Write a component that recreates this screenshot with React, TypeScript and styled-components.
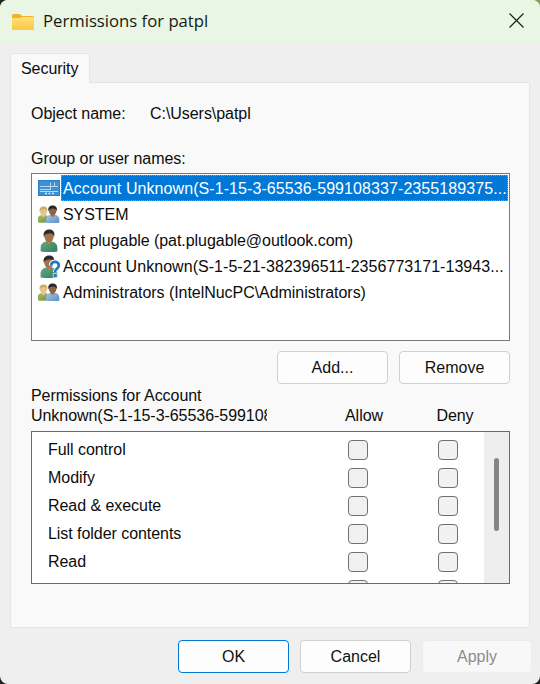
import React from "react";
import styled, { createGlobalStyle } from "styled-components";

const Global = createGlobalStyle`
  html, body { margin: 0; padding: 0; width: 540px; height: 684px; overflow: hidden; }
  body {
    background:
      linear-gradient(90deg, #23281c 50%, #8d9a62 50%) top / 100% 50% no-repeat,
      #20221b;
    font-family: "Liberation Sans", Arial, sans-serif;
    font-size: 16px;
    letter-spacing: -0.05px;
    color: #0c0c0c;
  }
  #root { width: 540px; height: 684px; }
`;

const Window = styled.div`
  width: 540px; height: 684px; background: #efefef; border-radius: 8px;
  overflow: hidden; display: flex; flex-direction: column;
`;
const TitleBar = styled.header`
  height: 43px; flex: none; background: #e9f6e3; display: flex; align-items: center;
  padding: 0 16px 0 12px; box-sizing: border-box;
`;
const TitleText = styled.span`
  margin-left: 9px; flex: 1; font-family: "Open Sans", "Noto Sans", sans-serif; font-size: 16.7px;
  letter-spacing: 0; color: #151a14; margin-bottom: 2px;
`;
const CloseBtn = styled.div`
  width: 15px; height: 15px; display: flex; margin-bottom: 2px;
`;
const Body = styled.div`
  flex: 1; padding: 10px 8px 0 10px; display: flex; flex-direction: column; min-height: 0;
`;
const TabStrip = styled.div`
  display: flex; height: 29px; flex: none; position: relative; z-index: 1;
`;
const Tab = styled.div`
  width: 80px; height: 30px; box-sizing: border-box; background: #f9f9f9;
  border: 1px solid #e5e5e5; border-bottom: none; border-radius: 3px 3px 0 0;
  padding-left: 10px; line-height: 30px; font-size: 16px;
`;
const Panel = styled.section`
  width: 520px; height: 546px; flex: none; box-sizing: border-box; background: #f9f9f9;
  border: 1px solid #e5e5e5; padding: 21px 19px 0 20px; display: flex; flex-direction: column;
`;
const ObjectRow = styled.div`
  display: flex; height: 20px; line-height: 20px;
`;
const ObjectLabel = styled.span`
  width: 119px;
`;
const SectionLabel = styled.div`
  margin-top: 25px; height: 20px; line-height: 20px;
`;
const UserList = styled.div`
  margin-top: 4px; height: 168px; box-sizing: border-box; background: #fff;
  border: 1px solid #7a7a7a; padding: 1px; display: flex; flex-direction: column;
`;
const UserRow = styled.div`
  height: 26px; flex: none; display: flex; align-items: center; padding-left: 5px;
`;
const UserIcon = styled.div`
  width: 24px; height: 24px; flex: none; display: flex; align-items: center; justify-content: flex-start;
`;
const UserName = styled.span<{ $selected?: boolean; $spacing?: number }>`
  margin-left: -1px; padding: ${p => (p.$selected ? "1px" : "2px")} 0 0 2px; flex: ${p => (p.$selected ? 1 : "none")};
  height: ${p => (p.$selected ? "26px" : "auto")};
  line-height: ${p => (p.$selected ? "25px" : "normal")};
  letter-spacing: ${p => p.$spacing ?? -0.05}px;
  box-sizing: border-box; white-space: nowrap; overflow: hidden;
  background: ${p => (p.$selected ? "#0078d7" : "transparent")};
  color: ${p => (p.$selected ? "#fff" : "inherit")};
  outline: ${p => (p.$selected ? "1px dotted #f08a24" : "none")};
  outline-offset: -1px;
`;
const ButtonRow = styled.div`
  display: flex; justify-content: flex-end; gap: 11px; flex: none;
`;
const AddRow = styled(ButtonRow)`
  margin-top: 10px;
`;
const Button = styled.button<{ $primary?: boolean; $w?: number }>`
  width: ${p => p.$w ?? 111}px; height: 33px; box-sizing: border-box; border-radius: 4px;
  background: #fdfdfd; border: 1px solid ${p => (p.$primary ? "#0078d4" : "#d0d0d0")};
  font: 16px "Liberation Sans", Arial, sans-serif; color: #111; padding: 0;
  &:disabled { background: #f8f8f8; border-color: #ececec; color: #8c8c8c; }
`;
const PermHeader = styled.div`
  margin-top: 2px; height: 45px; display: flex;
`;
const PermTitle = styled.div`
  width: 236px; flex: none; line-height: 20px; overflow: hidden; white-space: nowrap;
`;
const PermCol = styled.div<{ $ml: number }>`
  width: 74px; margin-left: ${p => p.$ml}px; flex: none; text-align: center; line-height: 20px;
  padding-top: 20px; box-sizing: border-box;
`;
const PermBox = styled.div`
  height: 153px; box-sizing: border-box; background: #fff; border: 1px solid #6a6a6a;
  display: flex; overflow: hidden;
`;
const PermRows = styled.div`
  flex: 1; padding: 4px 0 0 16px; display: flex; flex-direction: column;
`;
const PermRow = styled.div`
  height: 28px; flex: none; display: flex; align-items: center;
`;
const PermName = styled.span`
  width: 300px; flex: none;
`;
const CheckBox = styled.span<{ $deny?: boolean }>`
  width: 20px; height: 20px; box-sizing: border-box; flex: none; background: #f1f1f1;
  border: 1px solid #707070; border-radius: 4px; margin-left: ${p => (p.$deny ? "70px" : "0")};
`;
const ScrollTrack = styled.div`
  width: 25px; flex: none; background: #eeeeee; position: relative;
`;
const ScrollThumb = styled.div`
  position: absolute; left: 10px; top: 26px; width: 5px; height: 73px; border-radius: 3px; background: #858585;
`;
const Footer = styled.footer`
  height: 57px; flex: none; padding-top: 12px; box-sizing: border-box;
`;

const Folder = () => (
  <svg width="22" height="18" viewBox="0 0 22 18">
    <defs>
      <linearGradient id="fg" x1="0" y1="0" x2="0" y2="1">
        <stop offset="0" stopColor="#ffe07a" />
        <stop offset="1" stopColor="#fcc83f" />
      </linearGradient>
    </defs>
    <path d="M0 2.500A1.500 1.500 0 0 1 1.500 1H8l2 2h10.500A1.500 1.500 0 0 1 22 4.500V7H0z" fill="#f0b429" />
    <path d="M0 5h8.500L10.500 4H20.500A1.500 1.500 0 0 1 22 5.500V15.500A1.500 1.500 0 0 1 20.500 17H1.500A1.500 1.500 0 0 1 0 15.500z" fill="url(#fg)" />
  </svg>
);

/* Bust drawn in a 17x22 box: head, hair, shoulders with a lighter collar */
const Bust = ({ id, skin, hair, shirt, light }: { id: string; skin: string; hair: string; shirt: string; light: string }) => (
  <g>
    <defs>
      <linearGradient id={id} x1="0" y1="0" x2="1" y2="1">
        <stop offset="0" stopColor={light} />
        <stop offset="1" stopColor={shirt} />
      </linearGradient>
    </defs>
    <path d="M0.500 21.500V17.500C0.500 14 3.500 12.500 6 12L8.500 14.500 11 12C13.500 12.500 16.500 14 16.500 17.500V21.500Q8.500 22.500 0.500 21.500Z" fill={`url(#${id})`} />
    <path d="M6 10h5v3l-2.500 2L6 13z" fill={skin} opacity=".85" />
    <ellipse cx="8.500" cy="7" rx="4.500" ry="5.500" fill={skin} />
    <path d="M3.500 7.500C2.500 2.500 5.500 0.500 8.500 0.500S14.500 2 13.500 7.500C12.800 5 11 4 8.500 4.200S4.500 5 3.500 7.500Z" fill={hair} />
  </g>
);

const GroupIcon = ({ id }: { id: string }) => (
  <svg width="22" height="18" viewBox="0 0 22 18">
    <g transform="translate(-1 1) scale(.76)">
      <Bust id={`${id}a`} skin="#e6c28e" hair="#c8ad62" shirt="#6c8f3e" light="#a8c06a" />
    </g>
    <g transform="translate(7.500 0) scale(.84 .82)">
      <Bust id={`${id}b`} skin="#8f6340" hair="#26262a" shirt="#5a8fc8" light="#a6c6e6" />
    </g>
  </svg>
);

const UserGlyph = () => (
  <svg width="18" height="23" viewBox="0 0 17 22" style={{ marginLeft: 2 }}>
    <Bust id="pu" skin="#a0714a" hair="#2b2b2b" shirt="#2f7f5e" light="#66a884" />
  </svg>
);

const UnknownGlyph = () => (
  <svg width="20" height="23" viewBox="0 0 19 22" style={{ marginLeft: 2 }}>
    <Bust id="un" skin="#a0714a" hair="#2b2b2b" shirt="#2f7f5e" light="#66a884" />
    <path d="M10.500 10C10.500 5.500 18 5.500 18 10 18 12.800 14.500 13 14.300 16.300" fill="none" stroke="#fff" strokeWidth="4.500" />
    <path d="M10.500 10C10.500 5.500 18 5.500 18 10 18 12.800 14.500 13 14.300 16.300" fill="none" stroke="#1f78c8" strokeWidth="2.600" />
    <rect x="12.500" y="17.500" width="3.800" height="3.800" fill="#1f78c8" stroke="#fff" strokeWidth=".6" />
  </svg>
);

const CapabilityIcon = () => (
  <svg width="22" height="16" viewBox="0 0 22 16">
    <rect x="0.500" y="0.500" width="21" height="15" fill="#3f8fd3" stroke="#2f7fc4" />
    <path d="M2 6.500H12.500V2.500M12.500 6.500H20M12.500 6.500V9.500H2M16.500 2.500V6.500M2 11.500H20" stroke="#b9d8f2" strokeWidth="1" fill="none" />
    <path d="M7 12.800h2v1.400H7zM10.500 12.800h2v1.400h-2zM14 12.800h2v1.400h-2z" fill="#dcecf9" />
  </svg>
);

const users: { name: string; icon: React.ReactNode; selected?: boolean; spacing?: number }[] = [
  { name: "Account Unknown(S-1-15-3-65536-599108337-2355189375...", icon: <CapabilityIcon />, selected: true, spacing: 0.08 },
  { name: "SYSTEM", icon: <GroupIcon id="g1" /> },
  { name: "pat plugable (pat.plugable@outlook.com)", icon: <UserGlyph /> },
  { name: "Account Unknown(S-1-5-21-382396511-2356773171-13943...", icon: <UnknownGlyph />, spacing: 0.045 },
  { name: "Administrators (IntelNucPC\\Administrators)", icon: <GroupIcon id="g2" /> },
];

/* The sixth row lies under the box's lower edge: only its checkboxes' tops show */
const perms = ["Full control", "Modify", "Read & execute", "List folder contents", "Read", ""];

export default function App() {
  return (
    <Window>
      <Global />
      <TitleBar>
        <Folder />
        <TitleText>Permissions for patpl</TitleText>
        <CloseBtn>
          <svg width="15" height="15" viewBox="0 0 15 15">
            <path d="M0.500 0.500 14.500 14.500M14.500 0.500 0.500 14.500" stroke="#1a1f1a" strokeWidth="1.200" fill="none" />
          </svg>
        </CloseBtn>
      </TitleBar>
      <Body>
        <TabStrip>
          <Tab>Security</Tab>
        </TabStrip>
        <Panel>
          <ObjectRow>
            <ObjectLabel>Object name:</ObjectLabel>
            <span>C:\Users\patpl</span>
          </ObjectRow>
          <SectionLabel>Group or user names:</SectionLabel>
          <UserList>
            {users.map(u => (
              <UserRow key={u.name}>
                <UserIcon>{u.icon}</UserIcon>
                <UserName $selected={u.selected} $spacing={u.spacing}>{u.name}</UserName>
              </UserRow>
            ))}
          </UserList>
          <AddRow>
            <Button>Add...</Button>
            <Button>Remove</Button>
          </AddRow>
          <PermHeader>
            <PermTitle>
              Permissions for Account
              <br />
              Unknown(S-1-15-3-65536-599108337
            </PermTitle>
            <PermCol $ml={60}>Allow</PermCol>
            <PermCol $ml={17}>Deny</PermCol>
          </PermHeader>
          <PermBox>
            <PermRows>
              {perms.map((p, i) => (
                <PermRow key={i}>
                  <PermName>{p}</PermName>
                  <CheckBox />
                  <CheckBox $deny />
                </PermRow>
              ))}
            </PermRows>
            <ScrollTrack>
              <ScrollThumb />
            </ScrollTrack>
          </PermBox>
        </Panel>
        <Footer>
          <ButtonRow>
            <Button $primary>OK</Button>
            <Button>Cancel</Button>
            <Button disabled $w={110}>Apply</Button>
          </ButtonRow>
        </Footer>
      </Body>
    </Window>
  );
}
